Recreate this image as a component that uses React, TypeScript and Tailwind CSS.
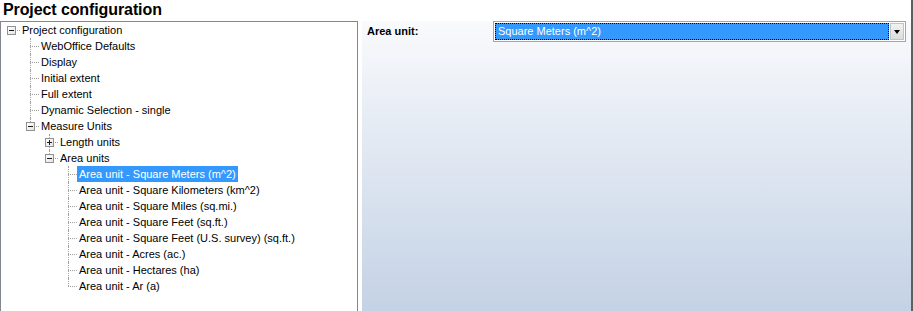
import React from "react";

type Row = {
  label: string;
  level: number;
  exp: "minus" | "plus" | null;
  last: boolean;
  cont: boolean[];
  selected?: boolean;
};

const areaItems = [
  "Area unit - Square Meters (m^2)",
  "Area unit - Square Kilometers (km^2)",
  "Area unit - Square Miles (sq.mi.)",
  "Area unit - Square Feet (sq.ft.)",
  "Area unit - Square Feet (U.S. survey) (sq.ft.)",
  "Area unit - Acres (ac.)",
  "Area unit - Hectares (ha)",
  "Area unit - Ar (a)",
];

const rows: Row[] = [
  { label: "Project configuration", level: 0, exp: "minus", last: true, cont: [] },
  { label: "WebOffice Defaults", level: 1, exp: null, last: false, cont: [false] },
  { label: "Display", level: 1, exp: null, last: false, cont: [false] },
  { label: "Initial extent", level: 1, exp: null, last: false, cont: [false] },
  { label: "Full extent", level: 1, exp: null, last: false, cont: [false] },
  { label: "Dynamic Selection - single", level: 1, exp: null, last: false, cont: [false] },
  { label: "Measure Units", level: 1, exp: "minus", last: true, cont: [false] },
  { label: "Length units", level: 2, exp: "plus", last: false, cont: [false, false] },
  { label: "Area units", level: 2, exp: "minus", last: true, cont: [false, false] },
  ...areaItems.map((l, i) => ({
    label: l,
    level: 3,
    exp: null,
    last: i === areaItems.length - 1,
    cont: [false, false, false],
    selected: i === 0,
  })),
];

function TreeRow({ r }: { r: Row }) {
  return (
    <div className="flex h-[16px]">
      {r.cont.map((c, i) => (
        <div key={i} className="relative w-[19px] h-full shrink-0">
          {c && (
            <div className="absolute left-[10px] top-0 bottom-0 border-l border-dotted border-[#a0a0a0]" />
          )}
        </div>
      ))}
      <div className="relative w-[19px] h-full shrink-0">
        {r.level > 0 && (
          <div
            className={
              "absolute left-[10px] top-0 border-l border-dotted border-[#a0a0a0] " +
              (r.last ? "h-[8px]" : "h-[16px]")
            }
          />
        )}
        <div className="absolute left-[10px] right-0 top-[8px] border-t border-dotted border-[#a0a0a0]" />
        {r.exp && (
          <div className="absolute left-[6px] top-[4px] w-[9px] h-[9px] border border-[#919191] bg-gradient-to-br from-white to-[#e4e4e4]">
            <div className="absolute left-[1px] top-[3px] w-[5px] h-[1px] bg-[#1a1a1a]" />
            {r.exp === "plus" && (
              <div className="absolute left-[3px] top-[1px] w-[1px] h-[5px] bg-[#1a1a1a]" />
            )}
          </div>
        )}
      </div>
      <div
        className={
          "h-full px-[2px] leading-[16px] whitespace-nowrap " +
          (r.selected ? "bg-[#3399ff] text-white" : "text-black")
        }
      >
        {r.label}
      </div>
    </div>
  );
}

export default function App() {
  return (
    <div className="w-[913px] h-[311px] bg-white flex overflow-hidden font-['Liberation_Sans',Arial,sans-serif] text-[11px]">
      <div className="w-[911px] h-full flex flex-col">
        <div className="h-[21px] pl-[3px] text-[16px] font-bold leading-[20px] text-black tracking-[-0.1px]">
          Project configuration
        </div>
        <div className="flex flex-1 min-h-0 gap-[4px]">
          <div className="w-[358px] h-full border-l border-t border-r border-[#828790] bg-white flex flex-col">
            {rows.map((r, i) => (
              <TreeRow key={i} r={r} />
            ))}
          </div>
          <div className="flex-1 h-full bg-gradient-to-b from-[#f9fafc] to-[#c4d2e5] pl-[5px] pr-[5px]">
            <div className="flex h-[21px] items-center">
              <div className="w-[126px] font-bold text-black">Area unit:</div>
              <div className="w-[413px] h-[21px] flex border border-[#a5a5a5] bg-white p-[1px] gap-[1px]">
                <div className="flex-1 bg-[#3399ff] border border-dotted border-black text-white leading-[15px] pl-[2px] whitespace-nowrap">
                  Square Meters (m^2)
                </div>
                <div className="w-[14px] h-full border border-[#c3c3c3] bg-gradient-to-b from-[#f2f2f2] to-[#dcdcdc] flex items-center justify-center">
                  <div className="w-0 h-0 border-l-[3.5px] border-r-[3.5px] border-t-[4px] border-l-transparent border-r-transparent border-t-black" />
                </div>
              </div>
            </div>
          </div>
        </div>
      </div>
      <div className="w-[2px] h-full bg-[#5f5f5f]" />
    </div>
  );
}
